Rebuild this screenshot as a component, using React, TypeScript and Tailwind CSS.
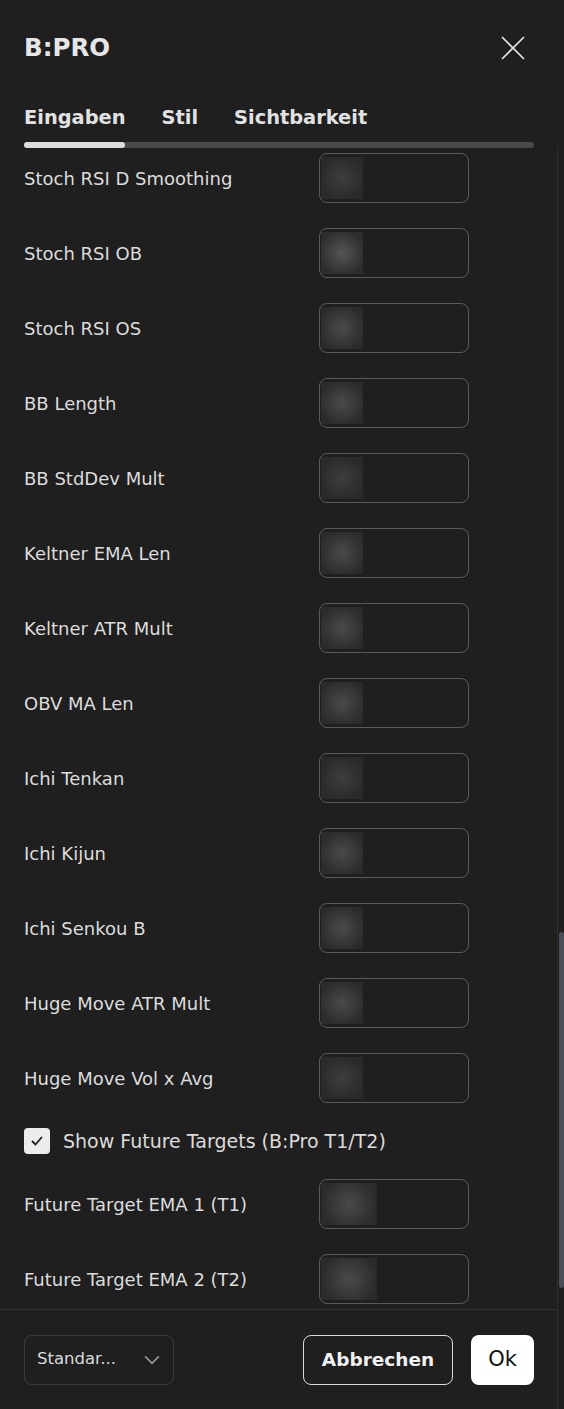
import { ChevronDown } from "lucide-react";

type Field = { label: string; glow: "dim" | "mid" | "bright"; wide?: boolean };

const fields: Field[] = [
  { label: "Stoch RSI D Smoothing", glow: "dim" },
  { label: "Stoch RSI OB", glow: "bright" },
  { label: "Stoch RSI OS", glow: "mid" },
  { label: "BB Length", glow: "mid" },
  { label: "BB StdDev Mult", glow: "dim" },
  { label: "Keltner EMA Len", glow: "mid" },
  { label: "Keltner ATR Mult", glow: "mid" },
  { label: "OBV MA Len", glow: "mid" },
  { label: "Ichi Tenkan", glow: "dim" },
  { label: "Ichi Kijun", glow: "mid" },
  { label: "Ichi Senkou B", glow: "mid" },
  { label: "Huge Move ATR Mult", glow: "mid" },
  { label: "Huge Move Vol x Avg", glow: "dim" },
];

const targets: Field[] = [
  { label: "Future Target EMA 1 (T1)", glow: "mid", wide: true },
  { label: "Future Target EMA 2 (T2)", glow: "mid", wide: true },
];

const glowClass = {
  dim: "bg-[radial-gradient(circle,#3e3e3e_0%,#2a2a2a_75%)]",
  mid: "bg-[radial-gradient(circle,#4a4a4a_0%,#2b2b2b_80%)]",
  bright: "bg-[radial-gradient(circle,#555555_0%,#2c2c2c_80%)]",
};

export default function App() {
  return (
    <div className="w-[564px] h-[1409px] bg-[#1f1f1f] text-[#dcdcdc] font-['DejaVu_Sans',sans-serif] flex flex-col overflow-hidden">
      <Header />
      <div className="flex flex-1 min-h-0">
        <div className="w-[557px] flex flex-col">
          <Content />
          <Footer />
        </div>
        {/* scrollbar track */}
        <div className="w-[7px] border-l border-[#2f2f2f] pt-[784px]">
          <div className="h-[356px] w-[5px] ml-[1px] rounded-full bg-[#4a4e59]" />
        </div>
      </div>
    </div>
  );
}

/* =====================
  HEADER
===================== */
const Header = () => {
  return (
    <div className="pl-6 pr-[30px]">
      <div className="h-[96px] flex items-center justify-between">
        <h1 className="text-[24.5px] font-bold text-[#e6e6e6]">B:PRO</h1>
        <svg width="24" height="24" viewBox="0 0 24 24" className="mr-[9px]">
          <path d="M1 1 L23 23 M23 1 L1 23" stroke="#e2e2e2" strokeWidth="1.7" />
        </svg>
      </div>
      <div className="h-[44px] flex items-center gap-[36px] text-[19.4px] font-bold text-[#e2e2e2]">
        <span>Eingaben</span>
        <span>Stil</span>
        <span>Sichtbarkeit</span>
      </div>
      <div className="mt-[2px] h-[6px] rounded-full bg-[#4a4a4a]">
        <div className="h-[6px] w-[101px] rounded-full bg-[#dcdcdc]" />
      </div>
    </div>
  );
};

/* =====================
  CONTENT
===================== */
const Content = () => {
  return (
    <div className="flex-1 min-h-0 overflow-hidden px-6 pt-[5px] flex flex-col gap-[25px]">
      {fields.map((f) => (
        <Row key={f.label} field={f} />
      ))}
      <label className="h-[26px] flex items-center gap-[13px]">
        <span className="w-[26px] h-[26px] rounded-[4px] bg-[#ececec] flex items-center justify-center">
          <svg width="16" height="16" viewBox="0 0 16 16">
            <path d="M3.5 8.5 L6.5 11.5 L12.5 4.5" fill="none" stroke="#1f1f1f" strokeWidth="1.8" strokeLinecap="round" strokeLinejoin="round" />
          </svg>
        </span>
        <span className="text-[19px]">Show Future Targets (B:Pro T1/T2)</span>
      </label>
      {targets.map((f) => (
        <Row key={f.label} field={f} />
      ))}
    </div>
  );
};

const Row = ({ field }: { field: Field }) => {
  return (
    <div className="shrink-0 h-[50px] grid grid-cols-[295px_150px] items-center">
      <span className="text-[18px]">{field.label}</span>
      <div className="h-[50px] rounded-lg border border-[#5a5a5a] pl-[1px] pt-[3px]">
        <div className={`${field.wide ? "w-[56px]" : "w-[42px]"} h-[42px] ${glowClass[field.glow]}`} />
      </div>
    </div>
  );
};

/* =====================
  FOOTER
===================== */
const Footer = () => {
  return (
    <div className="h-[100px] shrink-0 border-t border-[#333333] pl-6 pr-[23px] flex items-center justify-between">
      <div className="w-[150px] h-[50px] rounded-lg border border-[#3c3c3c] pl-3 pr-[8px] flex items-center justify-between">
        <span className="text-[16.5px] text-[#dcdcdc]">Standar...</span>
        <ChevronDown size={26} strokeWidth={1.4} className="text-[#a8a8a8]" />
      </div>
      <div className="flex items-center gap-[18px]">
        <button className="w-[150px] h-[50px] rounded-lg border border-[#dcdcdc] text-[18.5px] font-bold text-[#f0f0f0]">
          Abbrechen
        </button>
        <button className="w-[63px] h-[50px] rounded-lg bg-white text-[21px] text-[#131313]">
          Ok
        </button>
      </div>
    </div>
  );
};
